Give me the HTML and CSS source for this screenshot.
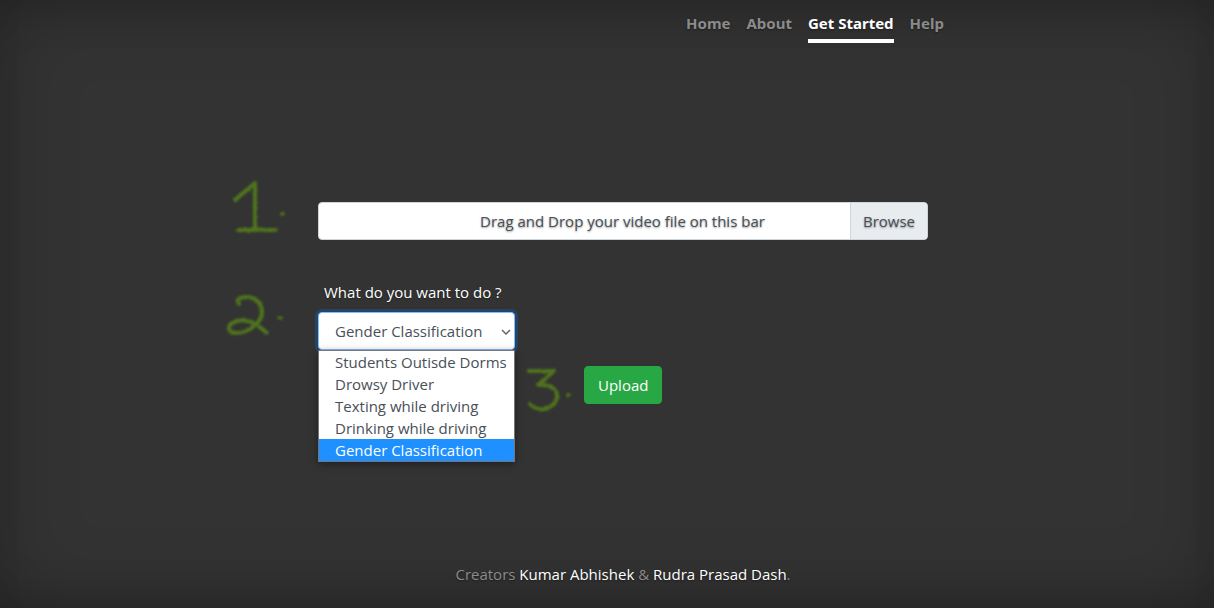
FILE: index.html
```html
<!DOCTYPE html>
<html lang="en">
<head>
<meta charset="utf-8">
<meta name="viewport" content="width=device-width, initial-scale=1">
<title>Get Started</title>
<link rel="stylesheet" href="styles.css">
</head>
<body>
<div class="cover">
  <header class="masthead">
    <nav class="nav">
      <a class="nav-link" href="#home">Home</a>
      <a class="nav-link" href="#about">About</a>
      <a class="nav-link active" href="#start" aria-current="page">Get Started</a>
      <a class="nav-link" href="#help">Help</a>
    </nav>
  </header>

  <main>
    <form class="steps">
      <svg class="numeral" viewBox="0 0 90 38" role="img" aria-label="Step 1">
        <defs>
          <filter id="chalk" x="-30%" y="-30%" width="160%" height="160%">
            <feTurbulence type="fractalNoise" baseFrequency="0.6" numOctaves="2" result="noise"/>
            <feDisplacementMap in="SourceGraphic" in2="noise" scale="3" xChannelSelector="R" yChannelSelector="G"/>
            <feGaussianBlur stdDeviation="1"/>
          </filter>
        </defs>
        <g filter="url(#chalk)">
          <path d="M7-2L27-19V28M10 28H48"/>
          <path d="M54 12h.6"/>
        </g>
      </svg>
      <div class="file-bar">
        <input class="file-input" type="file" id="video">
        <label class="file-label" for="video">
          <span class="file-text">Drag and Drop your video file on this bar</span>
          <span class="file-browse">Browse</span>
        </label>
      </div>

      <svg class="numeral" viewBox="0 0 90 38" role="img" aria-label="Step 2">
        <g filter="url(#chalk)">
          <path d="M11-8C7-12 12-15 19-15C28-15 34-8 34 0C34 6 31 10 26 14C20 19 14 21 8 21C2 21-1 17 2 13C5 9 13 7 20 9C28 11 33 16 39 21"/>
          <path d="M52 6h.6"/>
        </g>
      </svg>
      <div class="choice">
        <label class="choice-label" for="task">What do you want to do ?</label>
        <div class="select-wrap">
          <select class="select" id="task">
            <option>Students Outisde Dorms</option>
            <option>Drowsy Driver</option>
            <option>Texting while driving</option>
            <option>Drinking while driving</option>
            <option selected>Gender Classification</option>
          </select>
          <svg class="chevron" viewBox="0 0 10 6" aria-hidden="true"><path d="M1 1l4 4 4-4"/></svg>
          <ul class="menu" role="listbox" aria-label="Tasks">
            <li role="option">Students Outisde Dorms</li>
            <li role="option">Drowsy Driver</li>
            <li role="option">Texting while driving</li>
            <li role="option">Drinking while driving</li>
            <li class="selected" role="option" aria-selected="true">Gender Classification</li>
          </ul>
        </div>
      </div>

      <div class="submit">
        <svg class="numeral numeral-inline" viewBox="0 0 60 38" role="img" aria-label="Step 3">
          <g filter="url(#chalk)">
            <path d="M5 5H30L14 19C26 18 33 23 33 30C33 42 15 48 6 38"/>
            <path d="M44 29h.6"/>
          </g>
        </svg>
        <button class="upload" type="submit">Upload</button>
      </div>
    </form>
  </main>

  <footer class="footer">Creators <a href="#kumar">Kumar Abhishek</a> &amp; <a href="#rudra">Rudra Prasad Dash</a>.</footer>
</div>
</body>
</html>
```
FILE: styles.css
```css
* { box-sizing: border-box; }

body {
  margin: 0;
  background: #333;
  color: #fff;
  font: 15px/24px "Open Sans", "Noto Sans", sans-serif;
  text-shadow: 0 1px 2px rgba(0, 0, 0, .4);
}

a { color: #fff; text-decoration: none; }

.cover {
  min-height: 100vh;
  display: flex;
  flex-direction: column;
  padding: 11px 0 22px 32px;
  box-shadow:
    inset 0 0 80px rgba(0, 0, 0, .22),
    inset 0 30px 50px -30px rgba(0, 0, 0, .2),
    inset 0 -30px 50px -30px rgba(0, 0, 0, .2);
}

.masthead {
  width: 100%;
  max-width: 642px;
  margin: 0 auto;
}

.nav {
  display: flex;
  justify-content: flex-end;
  gap: 16px;
  font-family: "Noto Sans", "Open Sans", sans-serif;
}

.nav-link {
  padding-bottom: 4px;
  border-bottom: 4px solid transparent;
  color: #8b8b8b;
  font-weight: 700;
}

.nav-link.active {
  color: #fff;
  border-color: #fff;
}

main { margin: auto 0; }

.steps {
  display: grid;
  grid-template-columns: minmax(90px, 1fr) minmax(0, 610px) 1fr;
}

.steps > .numeral { grid-column: 1; justify-self: end; align-self: end; }
.file-bar, .choice, .submit { grid-column: 2; }

.numeral {
  width: 90px;
  height: 38px;
  overflow: visible;
  fill: none;
  stroke: #4f731f;
  stroke-width: 4;
  stroke-linecap: round;
  stroke-linejoin: round;
}

.numeral-inline { width: 60px; }

.file-bar { position: relative; }

.file-input {
  position: absolute;
  inset: 0;
  width: 100%;
  opacity: 0;
}

.file-label {
  display: flex;
  border: 1px solid #ced4da;
  border-radius: 4px;
  overflow: hidden;
  background: #fff;
  color: #495057;
}

.file-text { flex: 1; padding: 6px 0 6px 76px; text-align: center; }

.file-browse {
  padding: 6px 12px;
  border-left: 1px solid #ced4da;
  background: #e9ecef;
}

.choice { margin-top: 40px; }

.choice-label { display: block; padding-left: 6px; }

.select-wrap {
  position: relative;
  width: 197px;
  margin-top: 8px;
}

.select {
  display: block;
  width: 100%;
  height: 38px;
  padding: 0 16px;
  border: 1px solid #80bdff;
  border-radius: 4px;
  outline: 0;
  appearance: none;
  background: #fff;
  box-shadow: 0 0 0 3px rgba(0, 123, 255, .25);
  color: #495057;
  font: inherit;
}

.chevron {
  position: absolute;
  top: 17px;
  right: 4px;
  width: 10px;
  height: 6px;
  fill: none;
  stroke: #666;
  stroke-width: 1.5;
}

.menu {
  position: absolute;
  top: 100%;
  left: 0;
  z-index: 1;
  width: 100%;
  margin: 0;
  padding: 0;
  border: 1px solid #767676;
  background: #fff;
  box-shadow: 0 2px 8px rgba(0, 0, 0, .4);
  color: #495057;
  line-height: 22px;
  list-style: none;
  text-shadow: none;
  white-space: nowrap;
}

.menu li { padding-left: 16px; }
.menu .selected { background: #1e90ff; color: #fff; }

.submit {
  display: flex;
  margin: 16px 0 0 206px;
}

.upload {
  height: 38px;
  padding: 0 13px;
  border: 1px solid #28a745;
  border-radius: 4px;
  background: #28a745;
  color: #fff;
  font: inherit;
}

.footer { color: #8b8b8b; text-align: center; }
```
